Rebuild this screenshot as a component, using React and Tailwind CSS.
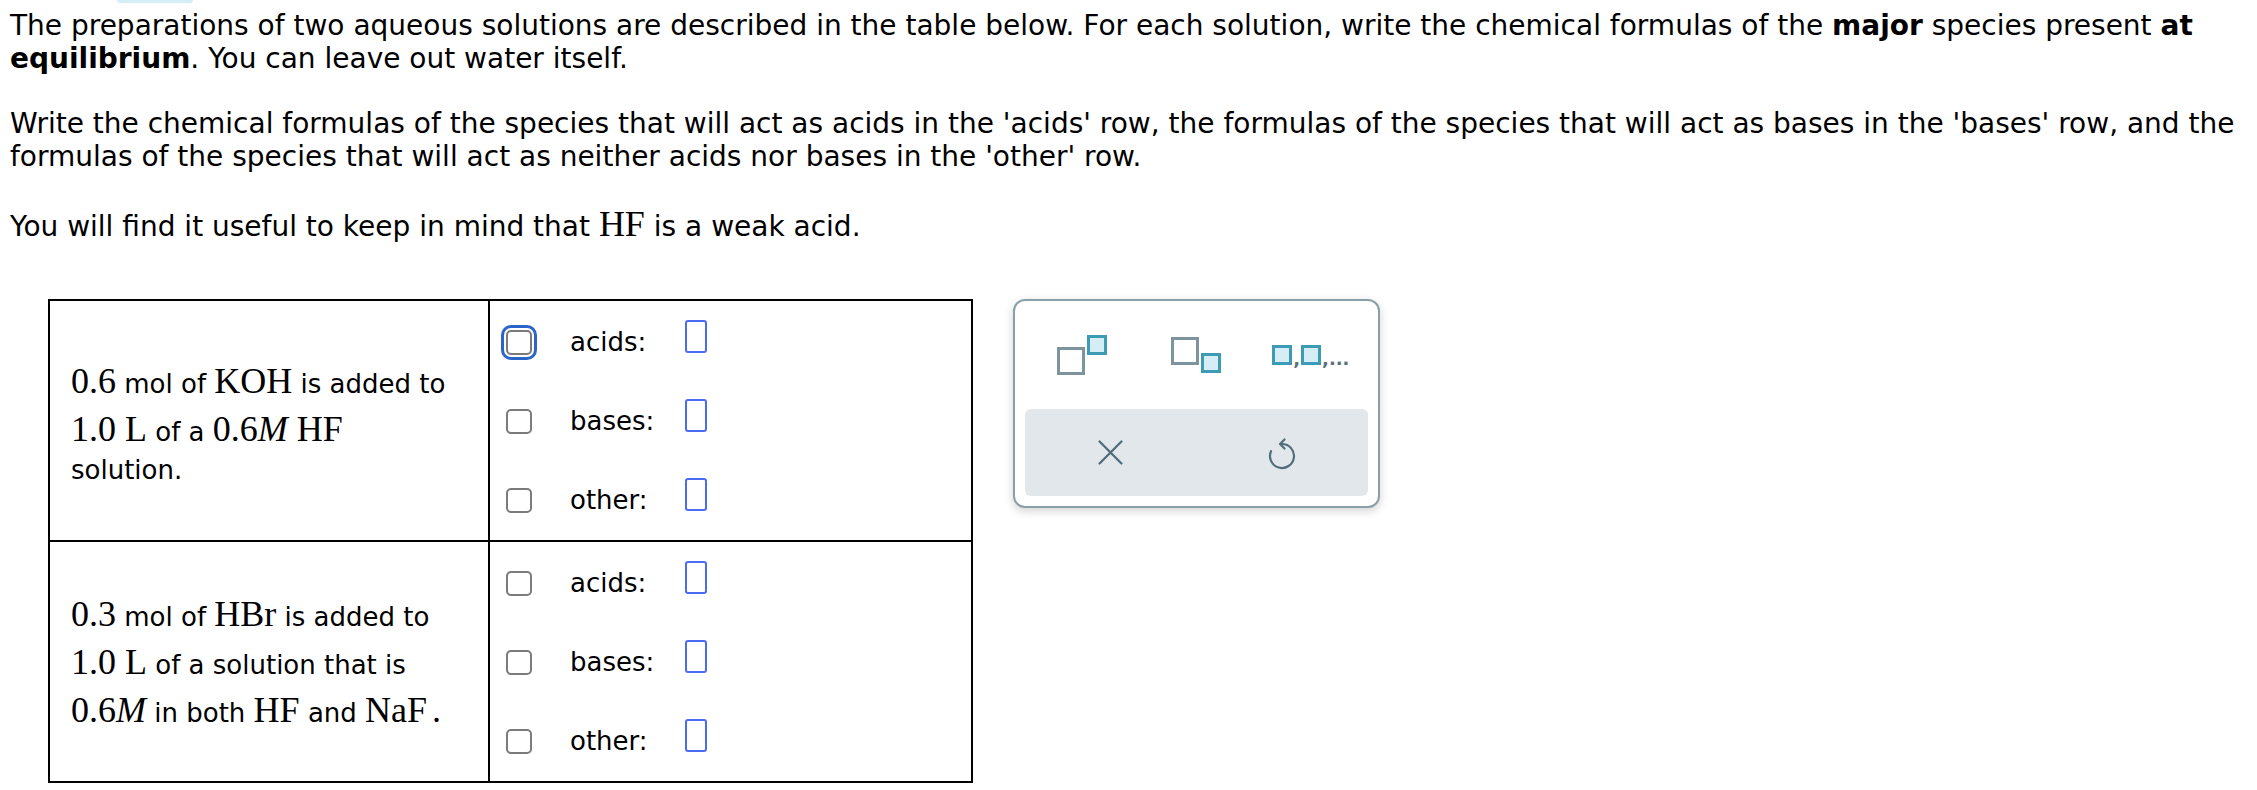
import React from 'react';

// math bits (MathJax-like serif)
const M = ({ children, className = '' }) => (
  <span className={`font-['Liberation_Serif','Times_New_Roman',serif] text-[36px] leading-none ${className}`}>
    {children}
  </span>
);

const Checkbox = ({ focused }) => (
  <span
    className={`block shrink-0 w-[26px] h-[25px] rounded-[5px] border-2 border-[#7b7b7b] bg-white ${
      focused ? 'outline-3 outline-solid outline-[#2a66c9] outline-offset-2' : ''
    }`}
  />
);

const AnswerRow = ({ label, focused }) => (
  <div className="flex items-center h-[79px]">
    <Checkbox focused={focused} />
    <span className="ml-[38px] w-[115px] shrink-0 text-[26px]">{label}</span>
    <span className="block w-[22px] h-[33px] -mt-[12px] rounded-[3px] border-2 border-[#4a6cf5]" />
  </div>
);

const Answers = ({ first }) => (
  <div className="flex-1 flex flex-col justify-center pl-[16px] pt-[2px]">
    <AnswerRow label="acids:" focused={first} />
    <AnswerRow label="bases:" />
    <AnswerRow label="other:" />
  </div>
);

const Palette = () => (
  <div className="w-[367px] h-[209px] flex flex-col rounded-[12px] border-2 border-[#8a9fa8] bg-white shadow-[0_3px_10px_rgba(0,0,0,0.18)]">
    <div className="grid grid-cols-3 items-center h-[108px] px-[10px]">
      {/* superscript */}
      <div className="flex justify-center">
        <div className="flex items-start">
          <span className="block mt-[12px] w-[28px] h-[28px] border-[3px] border-[#7c949e]" />
          <span className="block ml-[2px] w-[20px] h-[20px] border-[3px] border-[#3d9bb5] bg-[#d5eef5]" />
        </div>
      </div>
      {/* subscript */}
      <div className="flex justify-center">
        <div className="flex items-start">
          <span className="block w-[28px] h-[28px] border-[3px] border-[#7c949e]" />
          <span className="block mt-[16px] ml-[2px] w-[20px] h-[20px] border-[3px] border-[#3d9bb5] bg-[#d5eef5]" />
        </div>
      </div>
      {/* list */}
      <div className="flex justify-center">
        <div className="flex items-end font-bold text-[18px] leading-none text-[#5b717c]">
          <span className="block w-[20px] h-[20px] border-[3px] border-[#3d9bb5] bg-[#d5eef5]" />
          <span className="px-[1px] -mb-[3px]">,</span>
          <span className="block w-[20px] h-[20px] border-[3px] border-[#3d9bb5] bg-[#d5eef5]" />
          <span className="pl-[1px] -mb-[3px]">,...</span>
        </div>
      </div>
    </div>
    <div className="mx-[10px] h-[87px] grid grid-cols-2 items-center rounded-[6px] bg-[#e1e7ea]">
      <div className="flex justify-center">
        <svg width="25" height="25" viewBox="0 0 24 24" fill="none" stroke="#4f6d7a" strokeWidth="2.2" strokeLinecap="round">
          <path d="M1.5 1.5 L22.5 22.5 M22.5 1.5 L1.5 22.5" />
        </svg>
      </div>
      <div className="flex justify-center">
        <svg width="28" height="34" viewBox="0 0 28 34" fill="none" stroke="#4f6d7a" strokeWidth="2.2" strokeLinecap="round" strokeLinejoin="round">
          <path d="M14 8 A12 12 0 1 1 3 15.2" />
          <path d="M16.5 3.5 L12 8 L16.5 12.5" />
        </svg>
      </div>
    </div>
  </div>
);

export default function App() {
  return (
    <div className="min-h-screen bg-white text-black font-['DejaVu_Sans',Verdana,sans-serif]">
      <div className="ml-[117px] w-[76px] h-[3px] rounded-b-full bg-[#d5eef6]" />

      <div className="pl-[10px] text-[28px] leading-[33px] whitespace-nowrap">
        <p className="mt-[6px]">
          The preparations of two aqueous solutions are described in the table below. For each solution, write the chemical formulas of the <b>major</b> species present <b>at</b>
          <br />
          <b>equilibrium</b>. You can leave out water itself.
        </p>
        <p className="mt-[32px]">
          Write the chemical formulas of the species that will act as acids in the 'acids' row, the formulas of the species that will act as bases in the 'bases' row, and the
          <br />
          formulas of the species that will act as neither acids nor bases in the 'other' row.
        </p>
        <p className="mt-[33px]">
          You will find it useful to keep in mind that <M>HF</M> is a weak acid.
        </p>
      </div>

      <div className="flex items-start gap-[40px] ml-[48px] mt-[56px]">
        <div className="w-[925px] border-2 border-black">
          <div className="flex">
            <div className="w-[440px] shrink-0 border-r-2 border-black flex flex-col justify-center pl-[21px] pt-[2px] text-[26px]">
              <div className="leading-[48px]">
                <M>0.6</M> mol of <M>KOH</M> is added to
              </div>
              <div className="leading-[48px]">
                <M>1.0 L</M> of a <M>0.6<i>M</i> HF</M>
              </div>
              <div className="leading-[28px]">solution.</div>
            </div>
            <Answers first />
          </div>
          <div className="flex border-t-2 border-black">
            <div className="w-[440px] shrink-0 border-r-2 border-black flex flex-col justify-center pl-[21px] pt-[6px] text-[26px]">
              <div className="leading-[48px]">
                <M>0.3</M> mol of <M>HBr</M> is added to
              </div>
              <div className="leading-[48px]">
                <M>1.0 L</M> of a solution that is
              </div>
              <div className="leading-[48px]">
                <M>
                  0.6<i>M</i>
                </M>{' '}
                in both <M>HF</M> and <M>NaF</M>
                <M className="ml-[5px]">.</M>
              </div>
            </div>
            <Answers />
          </div>
        </div>

        <Palette />
      </div>
    </div>
  );
}
